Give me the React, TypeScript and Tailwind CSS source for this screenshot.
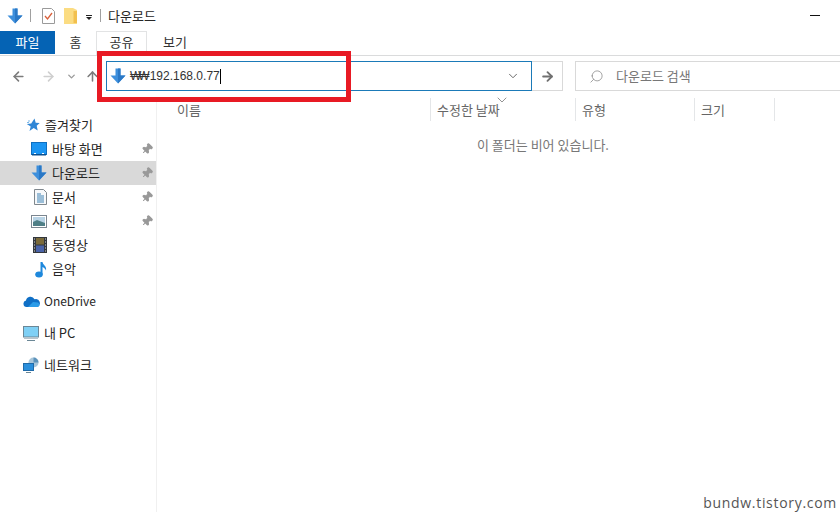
import { ArrowLeft, ArrowRight, ArrowUp, ChevronDown, Pin, Search } from "lucide-react";

function DownloadArrow({ size = 16 }: { size?: number }) {
  return (
    <svg width={size} height={size} viewBox="0 0 16 16" className="shrink-0">
      <path d="M5.5 0.5h5v7h5L8 15.5 0.5 7.5h5z" fill="#3d8fdc" />
      <path d="M8 0.5h2.5v7h5L8 15.5z" fill="#2a78c6" />
    </svg>
  );
}

function QuickCheck() {
  return (
    <svg width="13" height="16" viewBox="0 0 13 16">
      <path d="M.5 .5h9l3 3v12H.5z" fill="#fff" stroke="#9a9a9a" />
      <path d="M3 8l2.500 3 4.500-6" fill="none" stroke="#d9603b" strokeWidth="1.3" />
    </svg>
  );
}

function QuickFolder() {
  return (
    <svg width="13" height="16" viewBox="0 0 13 16">
      <path d="M0 0h9l4 2v14H0z" fill="#fbdc82" />
      <path d="M9.500 3H13v12H9.500z" fill="#f2c04e" />
    </svg>
  );
}

function StarIcon() {
  return (
    <svg width="14" height="14" viewBox="0 0 14 14">
      <path d="M8.500 .5l1.200 4.200 4 .3-3 2.800 1 4.600-4-2.300-4.200 3 1.200-4.600L.8 6l4.400-.6z" fill="#2f86d6" />
      <path d="M2 3h2M1 4.500h2" stroke="#7db8e8" />
    </svg>
  );
}

function DesktopIcon() {
  return (
    <svg width="16" height="14" viewBox="0 0 16 14">
      <rect x=".5" y=".5" width="15" height="12" fill="#1b95f2" stroke="#0f6fc0" />
      <path d="M1 12h14v1.500H1z" fill="#0b4f8f" />
      <path d="M3 11.500h2M11 11.500h2" stroke="#fff" />
    </svg>
  );
}

function DocIcon() {
  return (
    <svg width="13" height="16" viewBox="0 0 13 16">
      <path d="M.5 .5h9l3 3v12H.5z" fill="#f6f8fa" stroke="#7f878d" />
      <path d="M3 5h4M3 7h7M3 9h7M3 11h7M3 13h7" stroke="#3f83b5" />
    </svg>
  );
}

function PhotoIcon() {
  return (
    <svg width="16" height="13" viewBox="0 0 16 13">
      <rect x=".5" y=".5" width="15" height="12" fill="#fff" stroke="#7b8690" />
      <rect x="2" y="2" width="12" height="9" fill="#b9d4e6" />
      <path d="M2 7l4-2 8 3v3H2z" fill="#4f7f86" />
    </svg>
  );
}

function VideoIcon() {
  return (
    <svg width="14" height="16" viewBox="0 0 14 16">
      <rect width="14" height="16" fill="#33373c" />
      <rect x="3" y="1" width="8" height="6.500" fill="#7a6a3a" />
      <rect x="3" y="8.500" width="8" height="6.500" fill="#4a63a8" />
      <path d="M1 2h1M1 5h1M1 8h1M1 11h1M1 14h1M12 2h1M12 5h1M12 8h1M12 11h1M12 14h1" stroke="#d8dce0" />
    </svg>
  );
}

function MusicIcon() {
  return (
    <svg width="12" height="17" viewBox="0 0 12 17">
      <ellipse cx="4" cy="13.500" rx="3.800" ry="3" fill="#1e88dc" />
      <path d="M5.500 1h2c.3 3 4.500 4 3.500 8.500-.6-2-2.500-3-3.500-3.500V13.500h-2z" fill="#1e88dc" />
    </svg>
  );
}

function CloudIcon() {
  return (
    <svg width="17" height="11" viewBox="0 0 17 11">
      <path d="M3.500 11A3.300 3.300 0 0 1 3 4.500 4.500 4.500 0 0 1 11.500 3.200 3.800 3.800 0 0 1 14 11z" fill="#0f6fc6" />
      <path d="M5 11l5-5 5 .5c2 1.500 2 4.500-1 4.500z" fill="#2a9be8" />
    </svg>
  );
}

function PcIcon() {
  return (
    <svg width="16" height="15" viewBox="0 0 16 15">
      <rect x=".5" y=".5" width="15" height="10.500" fill="#7fd0f5" stroke="#6b8796" />
      <path d="M1 11.500h14V13H1z" fill="#b8c4cc" />
      <path d="M4 14.500h8" stroke="#6b8796" />
    </svg>
  );
}

function NetworkIcon() {
  return (
    <svg width="16" height="16" viewBox="0 0 16 16">
      <circle cx="10.500" cy="5.500" r="5" fill="#a9c6da" />
      <path d="M10.500 .5a5 5 0 0 1 5 5h-5z" fill="#5d93bb" />
      <rect x=".5" y="6.500" width="10" height="7" fill="#2a8fdc" stroke="#1f6aa8" />
      <path d="M3 15.500h5" stroke="#6b8796" />
    </svg>
  );
}

const quick = [
  { icon: DesktopIcon, label: "바탕 화면", pin: true },
  { icon: () => <DownloadArrow />, label: "다운로드", pin: true, active: true },
  { icon: DocIcon, label: "문서", pin: true },
  { icon: PhotoIcon, label: "사진", pin: true },
  { icon: VideoIcon, label: "동영상" },
  { icon: MusicIcon, label: "음악" },
];

const others = [
  { icon: CloudIcon, label: "OneDrive", size: "text-[12px]" },
  { icon: PcIcon, label: "내 PC", size: "text-[13px]" },
  { icon: NetworkIcon, label: "네트워크", size: "text-[13px]" },
];

const columns = [
  { label: "이름", width: "w-[274px]", pad: "pl-[20px]" },
  { label: "수정한 날짜", width: "w-[145px]", pad: "pl-[6px]" },
  { label: "유형", width: "w-[119px]", pad: "pl-[6px]" },
  { label: "크기", width: "w-[80px]", pad: "pl-[6px]" },
];

export default function App() {
  return (
    <div className="relative flex h-[512px] w-[840px] flex-col overflow-hidden bg-white font-['Noto_Sans_CJK_KR','Liberation_Sans',sans-serif] text-[13px] text-[#262626]">
      {/* title bar */}
      <div className="flex h-[31px] shrink-0 items-center pl-[7px]">
        <DownloadArrow />
        <div className="ml-[7px] h-[13px] w-px bg-[#a0a0a0]" />
        <div className="ml-[11px] flex"><QuickCheck /></div>
        <div className="ml-[9px] flex"><QuickFolder /></div>
        <div className="ml-[8px] flex h-[8px] w-[7px] flex-col items-center justify-end gap-px">
          <div className="h-px w-[6px] bg-[#222]" />
          <div className="h-0 w-0 border-x-[3px] border-t-[3px] border-x-transparent border-t-[#222]" />
        </div>
        <div className="ml-[8px] h-[13px] w-px bg-[#a0a0a0]" />
        <span className="ml-[7px] leading-none">다운로드</span>
        <div className="ml-auto mr-[20px] h-px w-[10px] bg-[#111]" />
      </div>

      {/* ribbon tabs */}
      <div className="flex h-[25px] shrink-0 items-start border-b border-[#dadbdc] text-[#333]">
        <div className="flex h-[23px] w-[55px] items-center justify-center bg-[#0563b4] pb-px text-white">파일</div>
        <div className="flex h-[23px] w-[41px] items-center justify-center pb-px">홈</div>
        <div className="flex h-[24px] w-[51px] items-center justify-center border-x border-t border-[#e2e3e4] bg-white pb-[3px]">공유</div>
        <div className="flex h-[23px] w-[56px] items-center justify-center pb-px">보기</div>
      </div>

      {/* address row */}
      <div className="flex h-[42px] shrink-0 items-center pb-[2px]">
        <div className="flex w-[106px] items-center">
          <ArrowLeft size={15} strokeWidth={2.5} className="ml-[11px] text-[#7c7c7c]" />
          <ArrowRight size={15} strokeWidth={2.5} className="ml-[15px] text-[#cfcfcf]" />
          <ChevronDown size={11} strokeWidth={3} className="ml-[10px] text-[#9a9a9a]" />
          <ArrowUp size={15} strokeWidth={2.5} className="ml-[8px] text-[#7c7c7c]" />
        </div>
        <div className="flex h-[30px] w-[426px] items-center border border-[#1b7ab8] pl-[3px] pr-[11px]">
          <DownloadArrow size={16} />
          <span className="ml-[4px] font-['Liberation_Sans',sans-serif] text-[12px] text-[#333]">
            <span className="pr-[3px] tracking-[-3px]">₩₩</span>192.168.0.77
          </span>
          <div className="h-[15px] w-px bg-black" />
          <ChevronDown size={14} strokeWidth={1.5} className="ml-auto text-[#555]" />
        </div>
        <div className="flex h-[30px] w-[31px] items-center justify-center border border-l-0 border-[#d9d9d9]">
          <ArrowRight size={15} strokeWidth={3} className="text-[#707070]" />
        </div>
        <div className="ml-[12px] flex h-[30px] flex-1 items-center border border-r-0 border-[#d9d9d9] pl-[13px] text-[#777]">
          <Search size={15} strokeWidth={1.25} className="-scale-x-100 text-[#8a8a8a]" />
          <span className="ml-[12px]">다운로드 검색</span>
        </div>
      </div>

      {/* body */}
      <div className="flex min-h-0 flex-1">
        <nav className="w-[157px] shrink-0 border-r border-[#f0f0f0]">
          <div className="mt-[15px] flex h-[24px] items-center pl-[26px]">
            <StarIcon />
            <span className="ml-[5px]">즐겨찾기</span>
          </div>
          <ul>
            {quick.map(({ icon: Icon, label, pin, active }) => (
              <li key={label} className={`flex h-[24px] w-[156px] items-center ${active ? "bg-[#d9d9d9]" : ""}`}>
                <div className="flex w-[52px] shrink-0 items-center justify-end pr-[5px]">
                  <Icon />
                </div>
                <span>{label}</span>
                {pin && <Pin size={12} className="ml-auto mr-[3px] rotate-45 fill-[#999] text-[#999]" />}
              </li>
            ))}
          </ul>
          <ul className="mt-[8px] flex flex-col gap-[8px]">
            {others.map(({ icon: Icon, label, size }) => (
              <li key={label} className="flex h-[24px] items-center pl-[23px]">
                <div className="flex w-[21px] shrink-0 items-center">
                  <Icon />
                </div>
                <span className={size}>{label}</span>
              </li>
            ))}
          </ul>
        </nav>

        <main className="min-w-0 flex-1">
          <div className="relative flex h-[25px] pb-[2px] text-[#666]">
            {columns.map((col) => (
              <div key={col.label} className={`flex items-center ${col.width} ${col.pad} border-r border-[#e4e6e8]`}>
                {col.label}
              </div>
            ))}
            <ChevronDown size={16} strokeWidth={1.2} className="absolute left-[337px] -top-[6px] text-[#777]" />
          </div>
          <p className="mt-[13px] pl-[320px] leading-[18px] text-[#777]">이 폴더는 비어 있습니다.</p>
        </main>
      </div>

      {/* red highlight and watermark sit over the window */}
      <div className="absolute left-[97px] top-[51px] h-[51px] w-[254px] border-[5px] border-[#e81a24]" />
      <div className="absolute right-[3px] top-[494px] font-['Open_Sans',sans-serif] text-[14px] leading-[18px] tracking-[0.7px] text-[#555]">bundw.tistory.com</div>
    </div>
  );
}
